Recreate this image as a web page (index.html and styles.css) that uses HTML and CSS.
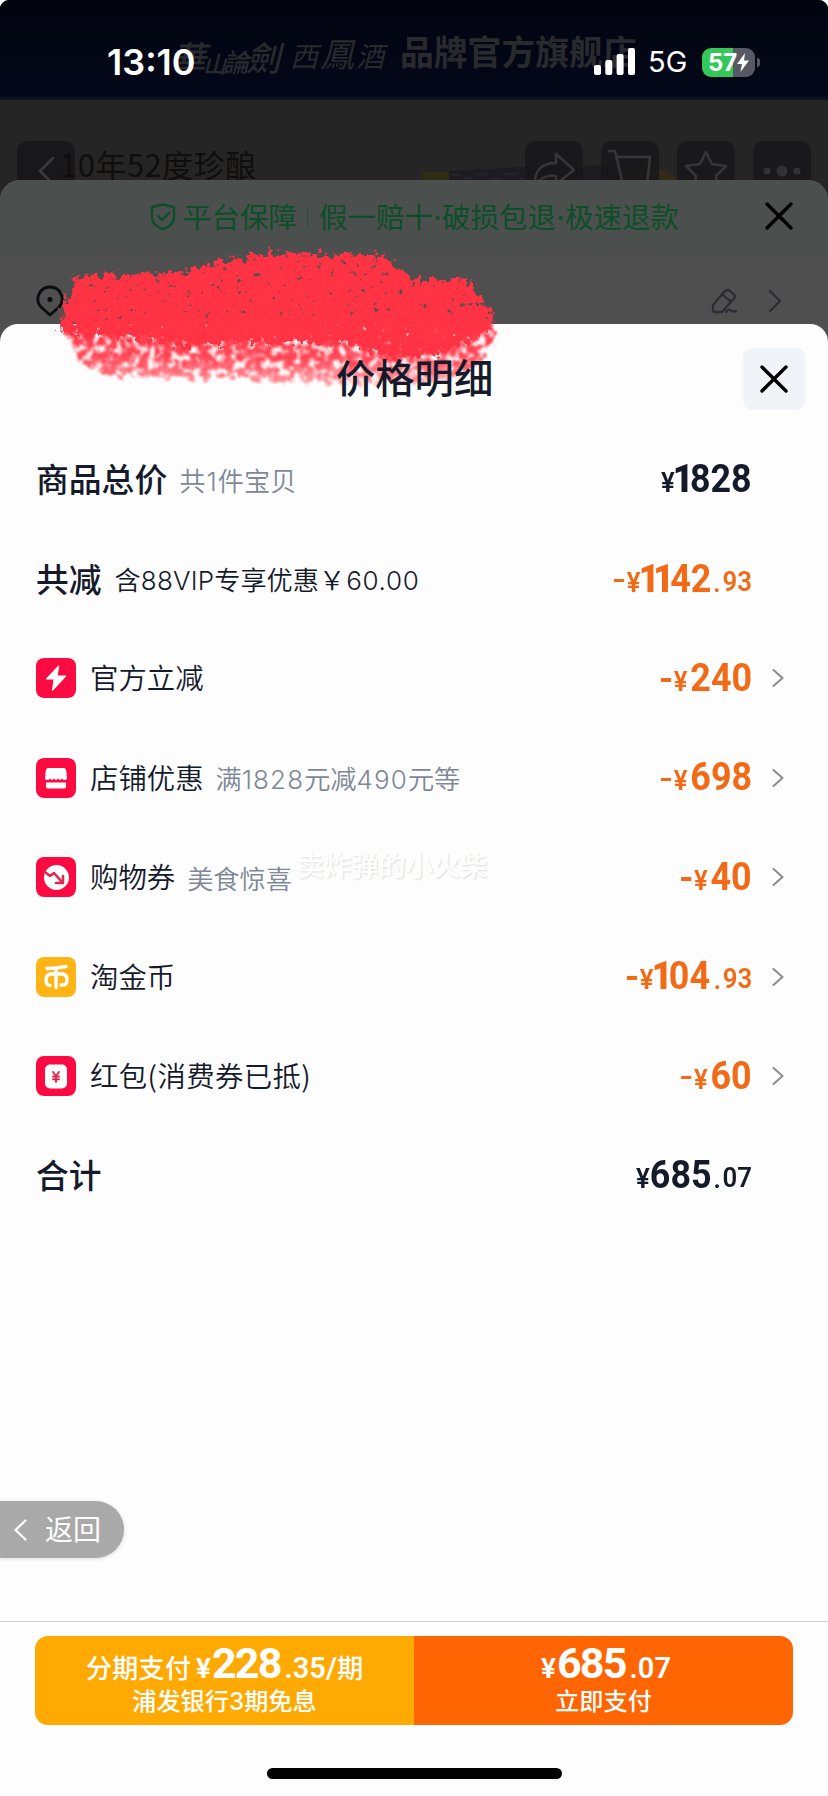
FILE: index.html
```html
<!DOCTYPE html>
<html lang="zh-CN">
<head>
<meta charset="utf-8">
<title>价格明细</title>
<link rel="stylesheet" href="styles.css">
</head>
<body>
<main class="phone">
  <header class="shop-head">
    <span class="brush brush-a">華<i>山</i><em>論</em>劍</span><span class="brush brush-b"><i>西</i>鳳<em>酒</em></span>
    <span class="shop-name">品牌官方旗舰店</span>
  </header>
  <div class="statusbar">
    <span class="clock">13:10</span>
    <svg class="signal" width="42" height="27" viewBox="0 0 42 27"><rect x="0" y="17" width="7" height="10" rx="2"/><rect x="11.3" y="12" width="7" height="15" rx="2"/><rect x="22.6" y="6" width="7" height="21" rx="2"/><rect x="34" y="0" width="7" height="27" rx="2"/></svg>
    <span class="net">5G</span>
    <span class="battery"><b>57</b><svg width="12" height="19" viewBox="0 0 12 19"><path d="M8 0 0 11h5L3.500 19 12 7.500H7z" fill="#fff"/></svg></span>
    <span class="nub"></span>
  </div>

  <section class="product">
    <span class="nav-btn"><svg width="58" height="58" viewBox="0 0 58 58"><path d="M36 17 23 30l13 13"/></svg></span>
    <span class="product-name">10年52度珍酿</span>
    <svg class="bottle" width="262" height="16" viewBox="0 0 262 16"><path d="M0 7h27v9H0z" fill="#2d2d12"/><path d="M27 6 105 2l98-2 24 4v12H27z" fill="#1b1b20"/><path d="M30 10h8m4 3h9m3-4h11m4 5h8m5-5h13m4 5h10" stroke="#222229" stroke-width="3"/><path d="M200 0h28v16h-28z" fill="#2a2514"/><path d="M228 5h12q10 4 16 11h-28z" fill="#362916"/></svg>
    <div class="nav-tools">
      <span class="nav-btn"><svg width="58" height="58" viewBox="0 0 58 58"><path d="M31 13 49 29 31 43V35C21 33 13 39 10 45 9 29 17 22 31 22Z"/></svg></span>
      <span class="nav-btn"><svg width="58" height="58" viewBox="0 0 58 58"><path d="M8 10h6l8 34h24l3-28H16"/></svg></span>
      <span class="nav-btn"><svg width="58" height="58" viewBox="0 0 58 58"><path d="m29 11 6 12 14 2-10 10 2 14-12-7-12 7 2-14L9 25l14-2z"/></svg></span>
      <span class="nav-btn"><svg class="dots" width="58" height="58" viewBox="0 0 58 58"><circle cx="14" cy="30" r="3.500"/><circle cx="29" cy="30" r="5.500"/><circle cx="44" cy="30" r="3.500"/></svg></span>
    </div>
  </section>

  <section class="checkout">
    <div class="guarantee">
      <svg class="shield" width="26" height="28" viewBox="0 0 26 28"><path d="M13 1.500 24 4v11c0 6-6 9-11 11.500C8 24 2 21 2 15V4Z"/><path d="m8 13 4 4 7-7"/></svg>
      <span class="g-main">平台保障</span><i class="bar"></i>
      <span class="g-list">假一赔十<em>·</em>破损包退<em>·</em>极速退款</span>
      <svg class="x" width="30" height="30" viewBox="0 0 30 30"><path d="m3 3 24 24M27 3 3 27"/></svg>
    </div>
    <div class="address">
      <svg class="pin" width="28" height="32" viewBox="0 0 28 32"><path d="M14 2a12 12 0 0 1 9 20l-9 8-9-8a12 12 0 0 1 9-20Z"/><circle cx="14" cy="14.500" r="2.500"/></svg>
      <div class="addr-tools">
        <svg width="26" height="26" viewBox="0 0 26 26"><path d="M2 23v-6L14 3q3-2 5 0l4 3.500q2 2 0 4L11 24H3ZM12 7l7 6M15 24q3-4 6-1 2 1 4 0"/></svg>
        <svg width="14" height="24" viewBox="0 0 14 24"><path d="m2 2 10 10L2 22"/></svg>
      </div>
    </div>

    <section class="detail">
      <div class="title-row">
        <h1>价格明细</h1>
        <span class="close"><svg class="x" width="30" height="30" viewBox="0 0 30 30"><path d="m3 3 24 24M27 3 3 27"/></svg></span>
      </div>
      <ul class="rows">
        <li><strong>商品总价</strong><span class="note">共<u class="n1">1</u>件宝贝</span><span class="price dark"><small>¥</small><b class="one">1</b>828</span></li>
        <li><strong>共减</strong><span class="note ink">含<u>88VIP</u>专享优惠&#xFFE5;<u class="amt">60.00</u></span><span class="price"><s></s><small>¥</small><b class="one">1</b><b class="one">1</b>42<small class="dec">.</small><small class="cents">93</small></span></li>
        <li><svg class="ico" viewBox="0 0 40 40"><rect width="40" height="40" rx="8" fill="#fb0b41"/><path d="M22.500 8 10 21h8l-1.500 11.500L30 18h-8.500z" fill="#fff" stroke="#fff" stroke-linejoin="round"/></svg><span class="label">官方立减</span><span class="price"><s></s><small class="cur">¥</small>240</span><svg class="go" viewBox="0 0 12 18"><path d="m1.500 1 9 8-9 8"/></svg></li>
        <li><svg class="ico" viewBox="0 0 40 40"><rect width="40" height="40" rx="8" fill="#fb0b41"/><path d="M12 10h16q2 0 2.500 5l.5 5q0 2-2 2-2 0-3-1.500-2 2.500-4 0-2 2.500-4 0-2 2.500-4 0-1 1.500-3 1.500-2 0-2-2l.5-5Q10 10 12 10ZM10 24.500h20v4q0 2-2 2H12q-2 0-2-2z" fill="#fff"/></svg><span class="label">店铺优惠</span><span class="note wide">满<u>1828</u>元减<u>490</u>元等</span><span class="price"><s></s><small class="cur">¥</small>698</span><svg class="go" viewBox="0 0 12 18"><path d="m1.500 1 9 8-9 8"/></svg></li>
        <li><svg class="ico" viewBox="0 0 40 40"><rect width="40" height="40" rx="8" fill="#fb0b41"/><circle cx="20.500" cy="20.500" r="12.500" fill="#fff"/><path d="m9 15 5 4 4-3 8 9m1-6v7h-7" fill="none" stroke="#e02850" stroke-width="2.600"/></svg><span class="label">购物券</span><span class="note low">美食惊喜</span><span class="price"><s></s><small class="cur">¥</small>40</span><svg class="go" viewBox="0 0 12 18"><path d="m1.500 1 9 8-9 8"/></svg></li>
        <li><svg class="ico" viewBox="0 0 40 40"><rect width="40" height="40" rx="8" fill="#fdb414"/><path d="M11 11.500Q20 11.500 30 9.500M20 11v19.500M16.500 17H14q-4 1-4 6t4 5.500M23.500 17H27q4 1 4 6t-4 5h-2M14 17h13" fill="none" stroke="#fff" stroke-width="3.400"/></svg><span class="label">淘金币</span><span class="price"><s></s><small>¥</small><b class="one">1</b>04<small class="dec wide-dot">.</small><small class="cents">93</small></span><svg class="go" viewBox="0 0 12 18"><path d="m1.500 1 9 8-9 8"/></svg></li>
        <li><svg class="ico" viewBox="0 0 40 40"><rect width="40" height="40" rx="8" fill="#fb0b41"/><rect x="9" y="8.500" width="22" height="24" rx="5" fill="#fff"/><path d="m17 16 3 4 3-4M20 20v6M17 20.500h6M17 23.300h6" fill="none" stroke="#e02850" stroke-width="1.900"/></svg><span class="label spaced">红包(消费券已抵)</span><span class="price"><s></s><small class="cur">¥</small>60</span><svg class="go" viewBox="0 0 12 18"><path d="m1.500 1 9 8-9 8"/></svg></li>
        <li><strong>合计</strong><span class="price dark"><small>¥</small>685<small class="dec">.</small><small class="cents">07</small></span></li>
      </ul>
      <div class="back"><svg width="16" height="22" viewBox="0 0 16 22"><path d="M12.500 1.500 2.500 11l10 9.500"/></svg><span>返回</span></div>
      <footer class="paybar">
        <div class="pay">
          <div class="half amber"><p class="sum"><span>分期支付</span><small class="cur">¥</small><b>228</b><small class="dec">.35/</small><span>期</span></p><p class="sub">浦发银行<u>3</u>期免息</p></div>
          <div class="half orange"><p class="sum"><small class="cur">¥</small><b>685</b><small class="dec">.07</small></p><p class="sub">立即支付</p></div>
        </div>
        <div class="home"></div>
      </footer>
    </section>
  </section>

  <svg class="scribble" width="460" height="150" viewBox="0 0 460 150">
    <defs>
      <filter id="rough" x="-5%" y="-5%" width="110%" height="110%" color-interpolation-filters="sRGB">
        <feTurbulence type="fractalNoise" baseFrequency=".16" numOctaves="4" seed="4" result="n"/>
        <feDisplacementMap in="SourceGraphic" in2="n" scale="20" xChannelSelector="R" yChannelSelector="B" result="d"/>
        <feColorMatrix in="n" values="0 0 0 0 0  0 0 0 0 0  0 0 0 0 0  0 8 0 0 -1.55" result="m"/>
        <feComposite in="d" in2="m" operator="in" result="c"/>
        <feGaussianBlur in="c" stdDeviation=".7"/>
      </filter>
      <filter id="chalk" x="-5%" y="-10%" width="110%" height="125%" color-interpolation-filters="sRGB">
        <feTurbulence type="fractalNoise" baseFrequency=".13" numOctaves="4" seed="9" result="n"/>
        <feDisplacementMap in="SourceGraphic" in2="n" scale="18" xChannelSelector="R" yChannelSelector="B" result="d"/>
        <feColorMatrix in="n" values="0 0 0 0 0  0 0 0 0 0  0 0 0 0 0  0 5 0 0 -1.6" result="m"/>
        <feComposite in="d" in2="m" operator="in" result="c"/>
        <feGaussianBlur in="c" stdDeviation=".8"/>
      </filter>
      <linearGradient id="fade" x1="0" y1="70" x2="0" y2="142" gradientUnits="userSpaceOnUse"><stop offset="0" stop-color="#ff3344"/><stop offset=".6" stop-color="#ff3344" stop-opacity=".9"/><stop offset="1" stop-color="#ff3344" stop-opacity=".4"/></linearGradient>
    </defs>
    <path d="M14 70 444 70 448 92 430 118 400 134 300 138 200 134 70 130 30 116Z" fill="url(#fade)" filter="url(#chalk)"/>
    <path d="M12 84 16 60 30 30 128 28 180 14 230 7 335 10 366 34 424 34 430 52 445 64 444 80 428 92 390 108 340 112 300 96 200 96 130 100 110 94 28 88Z" fill="#ff3344" filter="url(#rough)"/>
  </svg>
  <span class="watermark">卖炸弹的小火柴</span>
</main>
</body>
</html>
```
FILE: styles.css
```css
* { box-sizing: border-box; }
body { margin: 0; background: #fff; font-family: Inter, "Noto Sans CJK SC", sans-serif; color: #151a2b; }
h1, p, ul { margin: 0; padding: 0; }
svg { display: block; flex: none; fill: none; stroke-linecap: round; stroke-linejoin: round; }
.phone { position: relative; width: 828px; height: 1796px; overflow: hidden; background: #252525; border-radius: 9px 9px 0 0; }

.shop-head { height: 100px; padding: 28px 0 0 172px; display: flex; align-items: flex-start; background: linear-gradient(#02040f, #030819 95%, #101724); color: #292a2e; white-space: nowrap; }
.brush { display: flex; align-items: center; font: italic 500 34px/46px "Noto Sans CJK TC", sans-serif; letter-spacing: -3px; }
.brush i { font-size: 23px; padding-top: 12px; }
.brush em { font-size: 26px; padding-top: 8px; }
.brush-a { width: 118px; }
.brush-b { width: 110px; letter-spacing: 2px; font-weight: 400; }
.brush-b i, .brush-b em { font-size: 28px; padding-top: 4px; }
.shop-name { font: 700 33.800px/46px "Noto Sans CJK SC", sans-serif; }

.statusbar { position: absolute; top: 44px; left: 107px; height: 36px; width: 660px; display: flex; align-items: center; color: #fff; }
.clock { width: 487px; font-weight: 600; font-size: 36px; line-height: 36px; letter-spacing: 0; }
.signal { margin-right: 12px; margin-top: -1px; fill: #fff; }
.net { width: 54px; font-size: 29px; line-height: 36px; }
.battery { width: 53px; height: 29px; border-radius: 9px; padding-left: 6px; display: flex; align-items: center; background: linear-gradient(90deg, #34c759 58%, #565863 58%); }
.battery b { font-size: 24px; line-height: 29px; }
.nub { width: 3px; height: 9px; margin-left: 2px; border-radius: 0 4px 4px 0; background: #565863; }

.product { height: 80px; padding: 41px 17px 0; display: flex; align-items: flex-start; overflow: hidden; }
.nav-btn { width: 58px; height: 58px; flex: none; border-radius: 10px; background: #18181a; }
.nav-btn svg { stroke: #3a3a3c; stroke-width: 2.500; }
.nav-btn .dots { fill: #363638; stroke: none; }
.product-name { margin: 7px 0 0 -15px; width: 362px; font: 400 31px/32px "Noto Sans CJK SC", sans-serif; letter-spacing: .5px; color: #0f0e0d; }
.bottle { margin: 24px -157px 0 0; }
.nav-tools { display: flex; gap: 18px; margin-left: -2px; opacity: .85; }

.checkout { border-radius: 20px 20px 0 0; background: #4f4f4f; overflow: hidden; }
.guarantee { height: 74px; padding: 1px 35px 0 150px; display: flex; align-items: center; background: #4b504e; color: #0c4e28; font: 400 28.500px/40px "Noto Sans CJK SC", sans-serif; white-space: nowrap; }
.guarantee span { margin-top: -3px; }
.shield { stroke: #0c4e28; stroke-width: 2.400; margin-top: -1px; }
.g-main { margin-left: 7px; }
.bar { width: 1px; height: 22px; margin: 0 11px 0 10px; background: #275038; }
.g-list em { display: inline-block; width: 9px; font: 500 28px/30px Inter, sans-serif; text-align: center; }
.x { stroke: #000; stroke-width: 3.400; }
.guarantee .x { margin-left: auto; margin-right: -1px; margin-top: -3px; }
.address { height: 70px; padding: 24px 46px 0 36px; display: flex; align-items: center; justify-content: space-between; }
.pin { stroke: #0b0c10; stroke-width: 2.800; }
.pin circle { fill: #0b0c10; stroke: none; }
.addr-tools { display: flex; align-items: center; gap: 31px; }
.addr-tools svg { stroke: #2c2c33; stroke-width: 2.300; }

.detail { height: 1472px; border-radius: 18px 18px 0 0; background: #fdfdfd; display: flex; flex-direction: column; }
.title-row { height: 106px; padding: 24px 23px 0 0; display: flex; justify-content: flex-end; align-items: flex-start; }
h1 { position: relative; z-index: 3; width: 158px; margin: 0 249px 0 0; font: 500 39.300px/56px "Noto Sans CJK SC", sans-serif; white-space: nowrap; }
.close { width: 62px; height: 62px; display: grid; place-items: center; border-radius: 9px; background: #f0f4f9; }
.rows { list-style: none; padding-left: 36px; padding-right: 44px; height: 796px; display: grid; grid-auto-rows: 99.400px; }
.rows li { display: flex; align-items: center; white-space: nowrap; }
strong { font: 500 32.800px/48px "Noto Sans CJK SC", sans-serif; margin-top: -3px; }
.note { margin: 2px 0 0 12px; font: 350 26.200px/40px "Noto Sans CJK SC", sans-serif; color: #7f8896; }
.note.ink { color: #151a2b; margin: 1px 0 0 13px; }
.note u { text-decoration: none; font-family: Inter, sans-serif; font-size: 26px; letter-spacing: .2px; }
.note .n1 { margin: 0 1px; }
.note .amt { letter-spacing: .7px; margin-left: 1px; }
.note.wide u { letter-spacing: 1.100px; }
.ico { width: 40px; height: 40px; margin-right: 14px; }
.label { font: 350 28.400px/42px "Noto Sans CJK SC", sans-serif; margin-top: -2px; }
.label.spaced { letter-spacing: .4px; }
.price { margin: 3px 20px 0 auto; display: flex; align-items: baseline; color: #f26a16; font: 700 39px/48px Roboto, sans-serif; transform: scaleX(.92); transform-origin: right; }
.price.dark { color: #151a2b; }
.price s { width: 11px; height: 3.500px; margin-right: 3px; align-self: center; background: currentColor; }
.price small { font-weight: 600; font-size: 28px; }
.price .cur { margin-right: 3px; }
.price .dec { margin: 0 2px 0 2px; }
.price .wide-dot { margin-left: 4px; }
.price .cents { transform: translateY(-1px); }
.one { margin-left: -2px; margin-right: -4px; }
.one + .one { margin-left: -3px; }
.go { width: 12px; height: 18px; stroke: #8c8c90; stroke-width: 2; }
li:not(:has(.go))::after { content: ""; width: 12px; }

.back { width: 124px; height: 57px; margin-top: 275px; padding-left: 13px; display: flex; align-items: center; gap: 16px; border-radius: 0 29px 29px 0; background: #a9a9a9; color: #fff; font: 400 28px/40px "Noto Sans CJK SC", sans-serif; box-shadow: 0 1px 4px #0002; }
.back span { margin-top: -3px; }
.back svg { stroke: #fff; stroke-width: 2.300; }
.paybar { margin-top: 63px; height: 175px; border-top: 1px solid #d0d0d2; padding: 14px 35px 0; display: flex; flex-direction: column; align-items: center; }
.pay { width: 758px; height: 89px; display: grid; grid-template-columns: 1fr 1fr; border-radius: 13px; overflow: hidden; color: #fff; }
.half { display: flex; flex-direction: column; align-items: center; }
.amber { background: #ffaa02; }
.orange { background: #ff6502; }
.sum { height: 50px; margin-top: -2px; display: flex; align-items: baseline; font: 500 26.300px/58px "Noto Sans CJK SC", sans-serif; }
.sum b { font: 700 43px/58px Roboto, sans-serif; letter-spacing: -1.800px; }
.sum small { font: 600 29px/58px Roboto, sans-serif; margin-left: 4px; }
.sum .cur { font-size: 28px; margin: 0 1px 0 5px; }
.sub { font: 500 24.200px/32px "Noto Sans CJK SC", sans-serif; }
.sub u { text-decoration: none; font-family: Inter, sans-serif; }
.home { width: 295px; height: 11px; margin-top: 43px; border-radius: 6px; background: #000; }

.scribble { position: absolute; left: 48px; top: 246px; }
.watermark { position: absolute; left: 297px; top: 844px; font: 500 27.200px/40px "Noto Sans CJK SC", sans-serif; color: #fff; text-shadow: 1px 1px 2px #0002; white-space: nowrap; }
```
